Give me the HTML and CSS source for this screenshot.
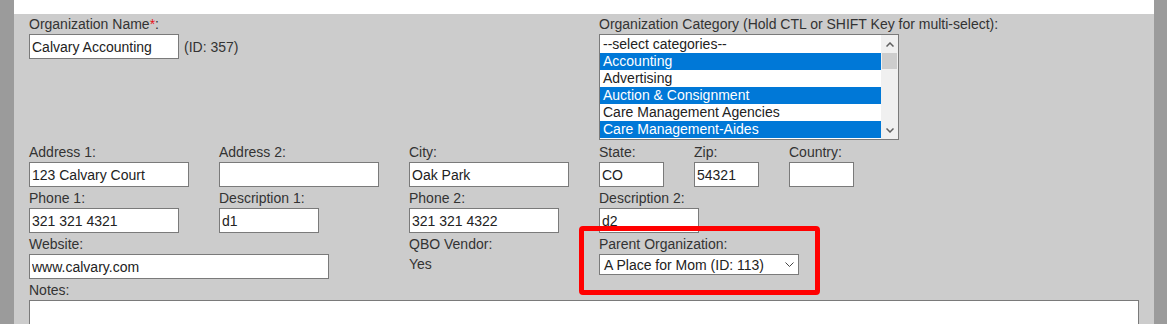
FILE: index.html
```html
<!DOCTYPE html>
<html lang="en">
<head>
<meta charset="utf-8">
<title>Organization</title>
<link rel="stylesheet" href="styles.css">
</head>
<body>
<div class="page">
  <div class="topband"></div>
  <form class="form">
    <div class="row row-first">
      <div class="cell c570">
        <div class="label">Organization Name<span class="req">*</span>:</div>
        <div class="inline">
          <input class="input w150" type="text" value="Calvary Accounting">
          <span class="note">(ID: 357)</span>
        </div>
      </div>
      <div class="cell">
        <div class="label">Organization Category (Hold CTL or SHIFT Key for multi-select):</div>
        <div class="listbox">
          <div class="options">
            <div class="opt">--select categories--</div>
            <div class="opt sel">Accounting</div>
            <div class="opt">Advertising</div>
            <div class="opt sel">Auction &amp; Consignment</div>
            <div class="opt">Care Management Agencies</div>
            <div class="opt sel">Care Management-Aides</div>
          </div>
          <div class="scrollbar">
            <div class="sb-btn">
              <svg width="8" height="5" viewBox="0 0 8 5"><polyline points="0.5,4.5 4,1 7.5,4.5" fill="none" stroke="#606060" stroke-width="1.5"/></svg>
            </div>
            <div class="sb-thumb"></div>
            <div class="sb-track"></div>
            <div class="sb-btn">
              <svg width="8" height="5" viewBox="0 0 8 5"><polyline points="0.5,0.5 4,4 7.5,0.5" fill="none" stroke="#606060" stroke-width="1.5"/></svg>
            </div>
          </div>
        </div>
      </div>
    </div>

    <div class="row">
      <div class="cell c190">
        <div class="label">Address 1:</div>
        <input class="input w160" type="text" value="123 Calvary Court">
      </div>
      <div class="cell c190">
        <div class="label">Address 2:</div>
        <input class="input w160" type="text" value="">
      </div>
      <div class="cell c190">
        <div class="label">City:</div>
        <input class="input w160" type="text" value="Oak Park">
      </div>
      <div class="cell c95">
        <div class="label">State:</div>
        <input class="input w65" type="text" value="CO">
      </div>
      <div class="cell c95">
        <div class="label">Zip:</div>
        <input class="input w65" type="text" value="54321">
      </div>
      <div class="cell">
        <div class="label">Country:</div>
        <input class="input w65" type="text" value="">
      </div>
    </div>

    <div class="row">
      <div class="cell c190">
        <div class="label">Phone 1:</div>
        <input class="input w150" type="text" value="321 321 4321">
      </div>
      <div class="cell c190">
        <div class="label">Description 1:</div>
        <input class="input w100" type="text" value="d1">
      </div>
      <div class="cell c190">
        <div class="label">Phone 2:</div>
        <input class="input w150" type="text" value="321 321 4322">
      </div>
      <div class="cell">
        <div class="label">Description 2:</div>
        <input class="input w100" type="text" value="d2">
      </div>
    </div>

    <div class="row">
      <div class="cell c380">
        <div class="label">Website:</div>
        <input class="input w300" type="text" value="www.calvary.com">
      </div>
      <div class="cell c190">
        <div class="label">QBO Vendor:</div>
        <div class="value">Yes</div>
      </div>
      <div class="cell parent">
        <div class="label">Parent Organization:</div>
        <div class="select">
          <span>A Place for Mom (ID: 113)</span>
          <svg width="9" height="5" viewBox="0 0 9 5"><polyline points="0.5,0.5 4.5,4.5 8.5,0.5" fill="none" stroke="#444" stroke-width="1"/></svg>
        </div>
        <div class="highlight"></div>
      </div>
    </div>

    <div class="row">
      <div class="cell wide">
        <div class="label">Notes:</div>
        <textarea class="textarea"></textarea>
      </div>
    </div>
  </form>
</div>
</body>
</html>
```

FILE: styles.css
```css
* { box-sizing: border-box; }

html, body {
  margin: 0;
  padding: 0;
  height: 100%;
  overflow: hidden;
}

body {
  background: #9b9b9b;
  font-family: "Liberation Sans", Arial, sans-serif;
  font-size: 14px;
  color: #333;
}

.page {
  margin: 0 13px 0 14px;
  min-height: 100%;
  background: #cccccc;
  display: flex;
  flex-direction: column;
}

.topband {
  height: 14px;
  background: #ffffff;
}

.form {
  padding: 2px 0 40px 15px;
  display: flex;
  flex-direction: column;
  gap: 3px;
}

.row {
  display: flex;
}

.row-first {
  margin-bottom: 1px;
}

.cell {
  display: flex;
  flex-direction: column;
  align-items: flex-start;
}

.c570 { width: 570px; }
.c380 { width: 380px; }
.c190 { width: 190px; }
.c95 { width: 95px; }
.wide { flex: 1; align-items: stretch; padding-right: 15px; }

.label {
  line-height: 16px;
  height: 16px;
  margin-bottom: 2px;
  color: #333;
  white-space: nowrap;
}

.req { color: #e8141c; }

.inline {
  display: flex;
  align-items: center;
  gap: 5px;
}

.note {
  color: #333;
  line-height: 16px;
}

.input {
  height: 25px;
  border: 1px solid #7a7a7a;
  background: #fff;
  padding: 0 2px;
  font-family: "Liberation Sans", Arial, sans-serif;
  font-size: 14px;
  color: #222;
  margin: 0;
  outline: none;
}

.w65 { width: 65px; }
.w100 { width: 100px; }
.w150 { width: 150px; }
.w160 { width: 160px; }
.w300 { width: 300px; }

.listbox {
  width: 300px;
  height: 106px;
  border: 1px solid #7a7a7a;
  background: #fff;
  display: flex;
}

.options {
  flex: 1;
  padding-top: 1px;
}

.opt {
  height: 17px;
  line-height: 16px;
  padding: 0 3px;
  color: #222;
  white-space: nowrap;
}

.opt.sel {
  background: #0078d7;
  color: #fff;
}

.scrollbar {
  width: 17px;
  background: #f0f0f0;
  display: flex;
  flex-direction: column;
  padding-top: 1px;
}

.sb-btn {
  height: 17px;
  display: flex;
  align-items: center;
  justify-content: center;
}

.sb-thumb {
  height: 16px;
  margin: 0 1px;
  background: #cdcdcd;
}

.sb-track { flex: 1; }

.value {
  margin-top: 2px;
  line-height: 16px;
  color: #333;
}

.parent {
  position: relative;
}

.select {
  width: 200px;
  height: 21px;
  border: 1px solid #7a7a7a;
  background: #fff;
  display: flex;
  align-items: center;
  justify-content: space-between;
  padding: 0 4px 0 4px;
  color: #222;
  line-height: 16px;
}

.select svg { margin-bottom: 1px; }

.highlight {
  position: absolute;
  left: -20px;
  top: -10px;
  width: 241px;
  height: 69px;
  border: 5px solid #ff0000;
  border-radius: 4px;
}

.textarea {
  height: 80px;
  border: 1px solid #7a7a7a;
  background: #fff;
  margin: 0;
  resize: none;
  width: 1110px;
}
```
